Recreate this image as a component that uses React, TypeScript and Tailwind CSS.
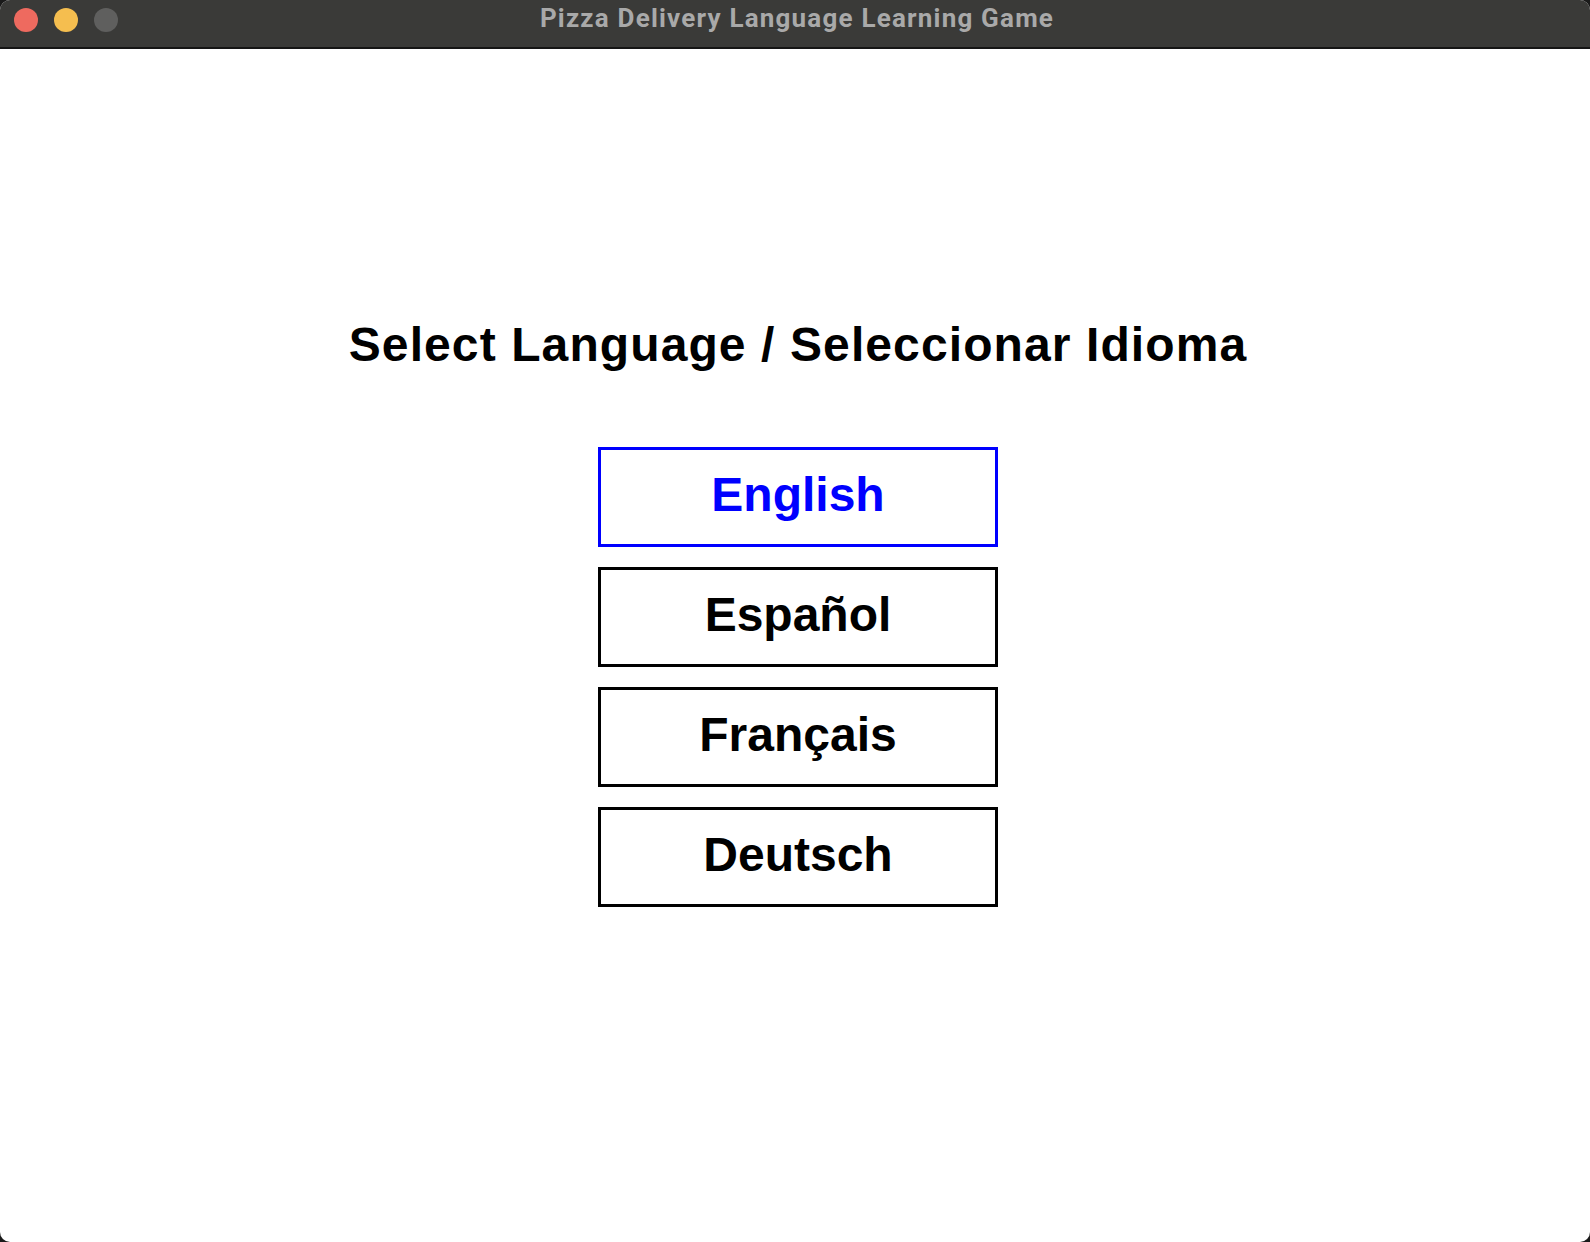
import React from "react";

const languages = [
  { label: "English", selected: true },
  { label: "Español", selected: false },
  { label: "Français", selected: false },
  { label: "Deutsch", selected: false },
];

function TitleBar() {
  return (
    <div className="relative flex h-[49px] items-start border-b-2 border-[#151515] bg-[#3a3a38] pl-[14px] pt-[8px]">
      <div className="flex gap-[16px]">
        <span className="h-[24px] w-[24px] rounded-full bg-[#ee6a5f]" />
        <span className="h-[24px] w-[24px] rounded-full bg-[#f5be4f]" />
        <span className="h-[24px] w-[24px] rounded-full bg-[#5f5f5e]" />
      </div>
      <div className="absolute inset-x-0 top-0 flex h-[37px] items-center justify-center pl-[4px] font-['Roboto',sans-serif] text-[26px] font-bold tracking-[1.2px] text-[#a9a9a9]">
        Pizza Delivery Language Learning Game
      </div>
    </div>
  );
}

export default function App() {
  return (
    <div className="h-[1242px] w-[1590px] overflow-hidden bg-[#1a1a1a]">
      <div className="flex h-full flex-col overflow-hidden rounded-[10px] bg-white">
        <TitleBar />
        <main className="flex flex-1 flex-col items-center pl-[6px] pt-[268px] font-['Liberation_Sans',Arial,sans-serif]">
          <h1 className="text-[48px] font-bold leading-[56px] tracking-[1.1px] text-black">
            Select Language / Seleccionar Idioma
          </h1>
          <div className="mt-[74px] flex flex-col gap-[20px]">
            {languages.map((l) => (
              <button
                key={l.label}
                className={
                  l.selected
                    ? "flex h-[100px] w-[400px] items-center justify-center border-[3px] border-[#0000ff] pb-1 text-[48px] font-bold leading-[56px] text-[#0000ff]"
                    : "flex h-[100px] w-[400px] items-center justify-center border-[3px] border-black pb-1 text-[48px] font-bold leading-[56px] text-black"
                }
              >
                {l.label}
              </button>
            ))}
          </div>
        </main>
      </div>
    </div>
  );
}
